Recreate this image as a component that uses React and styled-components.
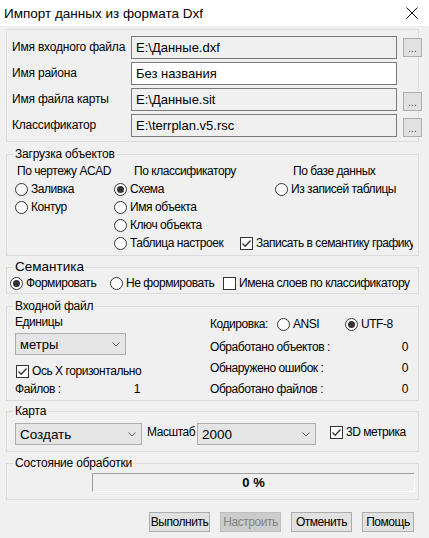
import React from "react";
import styled, { createGlobalStyle } from "styled-components";

const GlobalStyle = createGlobalStyle`
  html, body {
    margin: 0;
    padding: 0;
    background: #f0f0f0;
  }
  body {
    font-family: "Liberation Sans", Arial, sans-serif;
    font-size: 12px;
    color: #000;
  }
  * {
    box-sizing: border-box;
  }
`;

const Window = styled.div`
  width: 429px;
  height: 538px;
  background: #f0f0f0;
  display: flex;
  flex-direction: column;
  overflow: hidden;
  letter-spacing: -0.45px;
`;

const TitleBar = styled.div`
  height: 26px;
  flex-shrink: 0;
  background: #fff;
  display: flex;
  align-items: center;
  justify-content: space-between;
  padding: 0 11px 0 4px;
  font-size: 13.5px;
  letter-spacing: 0;
`;

const Body = styled.div`
  display: flex;
  flex-direction: column;
  padding: 3px 10px 0 6px;
`;

const Frame = styled.div`
  border: 1px solid #dcdcdc;
  padding: 6px 0 4px 5px;
  display: grid;
  grid-template-columns: 113px 266px 19px;
  grid-auto-rows: 23px;
  column-gap: 6px;
  row-gap: 3px;
`;

const FieldLabel = styled.div`
  display: flex;
  align-items: center;
  padding-bottom: 2px;
  white-space: nowrap;
  letter-spacing: -0.2px;
`;

const Field = styled.div`
  border: 1px solid #7a7a7a;
  background: ${(p) => (p.$editable ? "#fff" : "#f0f0f0")};
  padding-left: 4px;
  font-size: 13px;
  letter-spacing: 0;
  display: flex;
  align-items: center;
  white-space: nowrap;
`;

const BrowseButton = styled.div`
  width: 19px;
  height: 19px;
  align-self: ${(p) => p.$align || "center"};
  background: #e1e1e1;
  border: 1px solid #adadad;
  color: #444;
  font-size: 10px;
  letter-spacing: 0;
  display: flex;
  align-items: flex-end;
  justify-content: center;
  padding-bottom: 3px;
  line-height: 8px;
`;

const Group = styled.fieldset`
  margin: ${(p) => p.$mt}px 0 0 0;
  padding: 0;
  border: 1px solid #dcdcdc;
  min-width: 0;
`;

const Legend = styled.legend`
  margin-left: 6px;
  padding: 0 2px;
  line-height: 14px;
  font-size: ${(p) => p.$size || 12}px;
  letter-spacing: ${(p) => (p.$size ? "0" : "-0.2px")};
`;

const LoadGrid = styled.div`
  display: grid;
  grid-template-columns: 99px 126px 1fr;
  grid-auto-rows: 18px;
  padding: 1px 5px 3px 8px;
`;

const Cell = styled.div`
  display: flex;
  align-items: center;
  padding-left: ${(p) => p.$indent || 0}px;
  white-space: nowrap;
  overflow: hidden;
`;

const Option = styled.label`
  display: flex;
  align-items: center;
  gap: 3px;
  white-space: nowrap;
  font-size: ${(p) => p.$size || 12}px;
`;

const RadioMark = styled.span`
  width: 13px;
  height: 13px;
  flex-shrink: 0;
  border-radius: 50%;
  border: 1px solid #333;
  background: #fff;
  display: flex;
  align-items: center;
  justify-content: center;

  &::after {
    content: "";
    width: 7px;
    height: 7px;
    border-radius: 50%;
    background: ${(p) => (p.$on ? "#333" : "transparent")};
  }
`;

const CheckMark = styled.span`
  width: 13px;
  height: 13px;
  flex-shrink: 0;
  border: 1px solid #333;
  background: #fff;
  display: flex;
  align-items: center;
  justify-content: center;
`;

const SemanticsRow = styled.div`
  display: grid;
  grid-template-columns: 100px 113px 1fr;
  height: 18px;
  margin-bottom: 1px;
  padding-left: 3px;
  align-items: center;
`;

const InputGrid = styled.div`
  display: grid;
  grid-template-columns: 195px 1fr;
  padding: 2px 10px 1px 8px;
  align-items: start;
`;

const Column = styled.div`
  display: flex;
  flex-direction: column;
`;

const Line = styled.div`
  height: ${(p) => p.$h || 14}px;
  margin-top: ${(p) => p.$mt || 0}px;
  margin-left: ${(p) => p.$ml || 0}px;
  width: ${(p) => (p.$w ? `${p.$w}px` : "auto")};
  display: flex;
  align-items: center;
  justify-content: ${(p) => p.$justify || "flex-start"};
  white-space: nowrap;
`;

const Select = styled.div`
  width: ${(p) => p.$w}px;
  height: 22px;
  margin-top: ${(p) => p.$mt || 0}px;
  flex-shrink: 0;
  border: 1px solid #adadad;
  background: #e5e5e5;
  padding: 0 5px 0 4px;
  font-size: ${(p) => p.$size || 13}px;
  letter-spacing: 0;
  display: flex;
  align-items: center;
  justify-content: space-between;
`;

const EncLabel = styled.span`
  width: 67px;
`;

const EncOption = styled.div`
  width: ${(p) => p.$w}px;
`;

const MapRow = styled.div`
  display: flex;
  align-items: flex-start;
  padding: 5px 0 6px 8px;
`;

const ScaleLabel = styled.span`
  width: 55px;
  padding-left: 5px;
  margin-top: 2px;
  line-height: 14px;
  white-space: nowrap;
`;

const MapCheck = styled.div`
  margin-left: 14px;
  height: 18px;
  display: flex;
  align-items: center;
`;

const StatusRow = styled.div`
  padding: 3px 3px 7px 85px;
`;

const Progress = styled.div`
  height: 19px;
  border-top: 1px solid #a0a0a0;
  border-left: 1px solid #a0a0a0;
  border-right: 1px solid #fff;
  border-bottom: 1px solid #fff;
  background: #f0f0f0;
  display: flex;
  align-items: center;
  justify-content: center;
  font-weight: bold;
  font-size: 13px;
  letter-spacing: 0;
`;

const ButtonBar = styled.div`
  display: flex;
  justify-content: flex-end;
  gap: 10px;
  margin-top: 12px;
  padding-right: 5px;
`;

const Button = styled.div`
  width: ${(p) => p.$w}px;
  height: 20px;
  background: ${(p) => (p.$disabled ? "#cccccc" : "#e1e1e1")};
  border: 1px solid ${(p) => (p.$disabled ? "#bfbfbf" : "#adadad")};
  color: ${(p) => (p.$disabled ? "#838383" : "#000")};
  display: flex;
  align-items: center;
  justify-content: center;
  white-space: nowrap;
`;

const CloseIcon = () => (
  <svg width="12" height="12" viewBox="0 0 12 12">
    <path d="M0.5 0.5 L11.5 11.5 M11.5 0.5 L0.5 11.5" stroke="#000" strokeWidth="1" fill="none" />
  </svg>
);

const Chevron = () => (
  <svg width="8" height="5" viewBox="0 0 8 5">
    <path d="M0.5 0.5 L4 4 L7.5 0.5" stroke="#606060" strokeWidth="1" fill="none" />
  </svg>
);

const Radio = ({ on, children, size }) => (
  <Option $size={size}>
    <RadioMark $on={on} />
    {children}
  </Option>
);

const Checkbox = ({ on, children, size }) => (
  <Option $size={size}>
    <CheckMark>
      {on && (
        <svg width="11" height="11" viewBox="0 0 11 11">
          <path d="M1.5 5.5 L4.2 8.2 L9.5 2.5" stroke="#333" strokeWidth="1.3" fill="none" />
        </svg>
      )}
    </CheckMark>
    {children}
  </Option>
);

const files = [
  { label: "Имя входного файла", value: "E:\\Данные.dxf", button: "center" },
  { label: "Имя района", value: "Без названия", editable: true },
  { label: "Имя файла карты", value: "E:\\Данные.sit", button: "end" },
  { label: "Классификатор", value: "E:\\terrplan.v5.rsc", button: "end" },
];

const stats = [
  ["Обработано объектов :", "0"],
  ["Обнаружено ошибок :", "0"],
  ["Обработано файлов :", "0"],
];

const App = () => {
  return (
    <Window>
      <GlobalStyle />
      <TitleBar>
        <span>Импорт данных из формата Dxf</span>
        <CloseIcon />
      </TitleBar>
      <Body>
        <Frame>
          {files.map((f) => (
            <React.Fragment key={f.label}>
              <FieldLabel>{f.label}</FieldLabel>
              <Field $editable={f.editable}>{f.value}</Field>
              {f.button ? <BrowseButton $align={f.button}>...</BrowseButton> : <div />}
            </React.Fragment>
          ))}
        </Frame>

        <Group $mt={5}>
          <Legend>Загрузка объектов</Legend>
          <LoadGrid>
            <Cell $indent={2}>По чертежу ACAD</Cell>
            <Cell $indent={20}>По классификатору</Cell>
            <Cell $indent={53}>По базе данных</Cell>

            <Cell><Radio>Заливка</Radio></Cell>
            <Cell><Radio on>Схема</Radio></Cell>
            <Cell $indent={35}><Radio>Из записей таблицы</Radio></Cell>

            <Cell><Radio>Контур</Radio></Cell>
            <Cell><Radio>Имя объекта</Radio></Cell>
            <Cell />

            <Cell />
            <Cell><Radio>Ключ объекта</Radio></Cell>
            <Cell />

            <Cell />
            <Cell><Radio>Таблица настроек</Radio></Cell>
            <Cell><Checkbox on>Записать в семантику графику</Checkbox></Cell>
          </LoadGrid>
        </Group>

        <Group $mt={4}>
          <Legend $size={13.5}>Семантика</Legend>
          <SemanticsRow>
            <Radio on>Формировать</Radio>
            <Radio>Не формировать</Radio>
            <Checkbox>Имена слоев по классификатору</Checkbox>
          </SemanticsRow>
        </Group>

        <Group $mt={5}>
          <Legend>Входной файл</Legend>
          <InputGrid>
            <Column>
              <Line>Единицы</Line>
              <Select $w={111} $mt={4}>
                метры
                <Chevron />
              </Select>
              <Line $h={18} $mt={7} $ml={1}>
                <Checkbox on>Ось X горизонтально</Checkbox>
              </Line>
              <Line $h={18} $w={125} $justify="space-between">
                <span>Файлов :</span>
                <span>1</span>
              </Line>
            </Column>
            <Column>
              <Line $h={18}>
                <EncLabel>Кодировка:</EncLabel>
                <EncOption $w={68}><Radio>ANSI</Radio></EncOption>
                <EncOption $w={60}><Radio on>UTF-8</Radio></EncOption>
              </Line>
              {stats.map(([label, value], i) => (
                <Line key={label} $h={21} $mt={i === 0 ? 3 : 0} $justify="space-between">
                  <span>{label}</span>
                  <span>{value}</span>
                </Line>
              ))}
            </Column>
          </InputGrid>
        </Group>

        <Group $mt={3}>
          <Legend>Карта</Legend>
          <MapRow>
            <Select $w={127} $size={13.5}>
              Создать
              <Chevron />
            </Select>
            <ScaleLabel>Масштаб</ScaleLabel>
            <Select $w={119} $size={13.5}>
              2000
              <Chevron />
            </Select>
            <MapCheck>
              <Checkbox on>3D метрика</Checkbox>
            </MapCheck>
          </MapRow>
        </Group>

        <Group $mt={4}>
          <Legend>Состояние обработки</Legend>
          <StatusRow>
            <Progress>0 %</Progress>
          </StatusRow>
        </Group>

        <ButtonBar>
          <Button $w={61}>Выполнить</Button>
          <Button $w={61} $disabled>Настроить</Button>
          <Button $w={61}>Отменить</Button>
          <Button $w={52}>Помощь</Button>
        </ButtonBar>
      </Body>
    </Window>
  );
};

export default App;
